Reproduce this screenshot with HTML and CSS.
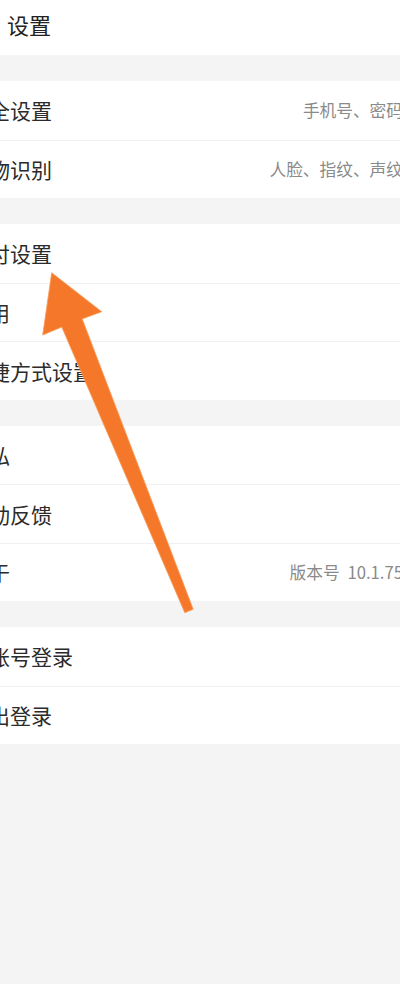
FILE: index.html
```html
<!DOCTYPE html>
<html lang="zh-CN">
<head>
  <meta charset="UTF-8">
  <meta name="viewport" content="width=device-width, initial-scale=1.0">
  <title>设置</title>
  <link rel="stylesheet" href="styles.css">
</head>
<body>
  <div class="page">
    <div class="header">
      <div class="title">设置</div>
    </div>

    <div class="group">
      <div class="row"><span class="label">安全设置</span><span class="value">手机号、密码</span></div>
      <div class="row"><span class="label">生物识别</span><span class="value">人脸、指纹、声纹</span></div>
    </div>

    <div class="group">
      <div class="row"><span class="label">支付设置</span></div>
      <div class="row"><span class="label">通用</span></div>
      <div class="row"><span class="label">快捷方式设置</span></div>
    </div>

    <div class="group">
      <div class="row"><span class="label">隐私</span></div>
      <div class="row"><span class="label">振动反馈</span></div>
      <div class="row"><span class="label">关于</span><span class="value version">版本号 10.1.75</span></div>
    </div>

    <div class="group">
      <div class="row"><span class="label">多账号登录</span></div>
      <div class="row"><span class="label">退出登录</span></div>
    </div>
  </div>

  <!-- the hand-drawn pointer that sits over the list -->
  <svg class="pointer" width="400" height="984" viewBox="0 0 400 984">
    <polygon points="51.7,272.7 101.7,311.7 82.2,318.9 193.2,609.3 184.8,612.7 61.8,327.1 42.7,335"
             fill="#f5782a" stroke="#f89a58" stroke-width="0.8" stroke-linejoin="round"/>
  </svg>
</body>
</html>
```

FILE: styles.css
```css
body {
  margin: 0;
  background-color: #f4f4f4;
  font-family: "Noto Sans CJK SC", "Noto Sans", sans-serif;
  color: #2b2b2b;
  overflow: hidden;
  position: relative;
  height: 984px;
}

.page {
  margin: 0 -3px 0 -48px;
}

.header {
  height: 55px;
  box-sizing: border-box;
  background: #ffffff;
  display: flex;
  align-items: center;
  padding: 0 0 8px 55px;
}

.title {
  font-size: 22px;
  color: #222;
}

.group {
  margin-top: 26px;
  background: #ffffff;
}

.row {
  height: 58.5px;
  box-sizing: border-box;
  display: flex;
  align-items: center;
  justify-content: space-between;
  padding-left: 16px;
}

.row + .row {
  border-top: 1px solid #f0f0f0;
}

.label {
  font-size: 21px;
  white-space: nowrap;
}

.value {
  font-size: 16.7px;
  color: #8a8a8a;
  white-space: nowrap;
}

.version {
  word-spacing: 4px;
}

.pointer {
  position: absolute;
  top: 0;
  left: 0;
  pointer-events: none;
}
```
